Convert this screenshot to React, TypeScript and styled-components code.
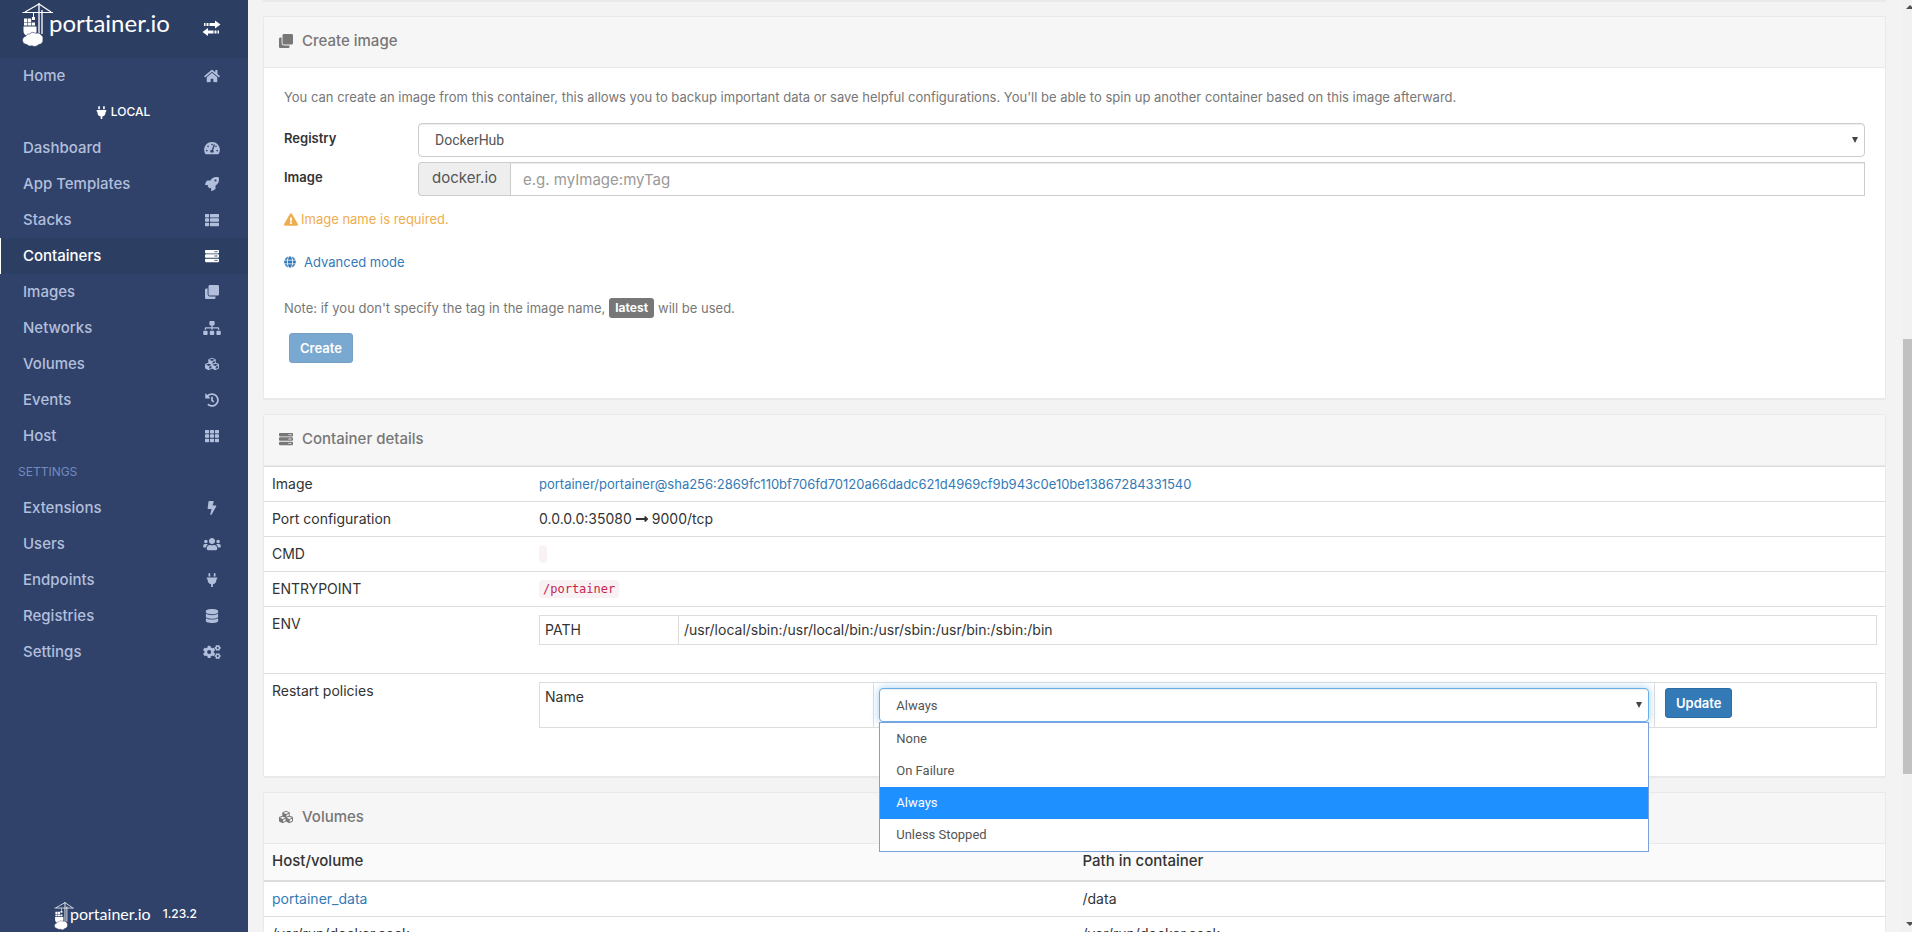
import React from "react";
import styled, { createGlobalStyle } from "styled-components";
import {
  FaBolt, FaClone, FaCogs, FaCubes, FaDatabase, FaExclamationTriangle, FaGlobe, FaHistory, FaHome,
  FaLongArrowAltRight, FaPlug, FaRocket, FaServer, FaSitemap, FaTachometerAlt, FaTh, FaThList, FaUsers,
} from "react-icons/fa";
import type { IconType } from "react-icons";

const GlobalStyle = createGlobalStyle`
  *, *::before, *::after { box-sizing: border-box; }
  body {
    margin: 0;
    background: #f3f3f3;
    color: #333;
    font: 400 13px/18px Inter, "Open Sans", sans-serif;
  }
  a { color: #337ab7; text-decoration: none; }
  button, input, select { font-family: inherit; margin: 0; }
`;

const Page = styled.div`
  display: flex;
  height: 100vh;
  overflow: hidden;
`;

/* ---------- Sidebar ---------- */

const Sidebar = styled.nav`
  flex: 0 0 248px;
  display: flex;
  flex-direction: column;
  background: #30426a;
`;

const SidebarHeader = styled.div`
  display: flex;
  align-items: flex-start;
  justify-content: space-between;
  height: 58px;
  padding: 3px 27px 0 22px;
  background: #2d3e63;
`;

const Brand = styled.div<{ $small?: boolean }>`
  display: flex;
  align-items: flex-start;
  color: #fff;
  font-family: Lato, sans-serif;
  font-size: ${(p) => (p.$small ? 16 : 24)}px;
  line-height: ${(p) => (p.$small ? 24 : 40)}px;
  svg {
    width: ${(p) => (p.$small ? 20 : 31)}px;
    height: ${(p) => (p.$small ? 28 : 44)}px;
    margin-right: -4px;
  }
`;

const ToggleButton = styled.button`
  display: flex;
  padding: 17px 0 0;
  border: 0;
  background: none;
  color: #fff;
`;

const Menu = styled.ul`
  flex: 1;
  margin: 0;
  padding: 0;
  list-style: none;
`;

const MenuLink = styled.a<{ $active?: boolean }>`
  display: flex;
  align-items: center;
  justify-content: space-between;
  height: 36px;
  padding: 0 27px 0 22px;
  border-left: 1px solid ${(p) => (p.$active ? "#fff" : "transparent")};
  background: ${(p) => (p.$active ? "#2d3e63" : "transparent")};
  color: ${(p) => (p.$active ? "#fff" : "#b2bfdc")};
  font-size: 15px;
  font-weight: 500;
  svg { width: 18px; height: 14px; }
`;

const MenuEndpoint = styled.li`
  display: flex;
  align-items: center;
  justify-content: center;
  gap: 3px;
  height: 36px;
  padding-right: 3px;
  color: #fff;
  font-size: 12px;
  font-weight: 500;
  svg { width: 13px; height: 13px; }
`;

const MenuTitle = styled.li`
  display: flex;
  align-items: center;
  height: 36px;
  padding-left: 18px;
  color: #738bc0;
  font-size: 12px;
`;

const SidebarFooter = styled.div`
  display: flex;
  align-items: flex-start;
  gap: 12px;
  height: 30px;
  padding-left: 54px;
`;

const Version = styled.span`
  color: #fff;
  font-size: 12px;
  font-weight: 500;
  line-height: 24px;
`;

/* ---------- Panels ---------- */

const Content = styled.main`
  flex: 1;
  min-width: 0;
  display: flex;
  flex-direction: column;
  gap: 14px;
  padding: 0 15px;
  overflow: hidden;
`;

const PanelEdge = styled.div`
  flex: 0 0 2px;
  background: #e9e9e9;
`;

const Panel = styled.section`
  flex: none;
  border: 1px solid #e9e9e9;
  border-bottom-width: 2px;
  border-radius: 2px;
  background: #fff;
`;

const PanelHeader = styled.h2`
  display: flex;
  align-items: center;
  gap: 9px;
  height: 51px;
  margin: 0;
  padding: 0 15px 2px;
  border-bottom: 1px solid #e9e9e9;
  background: #f6f6f6;
  color: #777;
  font-size: 15px;
  font-weight: 500;
  svg { flex: none; width: 14px; height: 14px; }
`;

/* ---------- Create image form ---------- */

const Form = styled.form`
  display: flex;
  flex-direction: column;
  padding: 20px 20px 35px;
  color: #777;
`;

const Fields = styled.div`
  display: grid;
  grid-template-columns: 134px 1fr;
  row-gap: 5px;
  margin: 17px 0 14px;
`;

const FieldLabel = styled.label`
  padding-top: 6px;
  color: #333;
  font-weight: 600;
`;

const SelectBox = styled.span`
  position: relative;
  display: block;
`;

const Select = styled.select<{ $open?: boolean }>`
  display: block;
  width: 100%;
  height: 34px;
  padding: 0 16px;
  appearance: none;
  outline: 0;
  border: 1px solid ${(p) => (p.$open ? "#66afe9" : "#ccc")};
  border-radius: 4px;
  background: #fff;
  box-shadow: inset 0 1px 1px rgba(0, 0, 0, 0.075)${(p) => (p.$open ? ", 0 0 8px rgba(102, 175, 233, 0.6)" : "")};
  color: #555;
  font-family: Roboto, sans-serif;
  font-size: ${(p) => (p.$open ? 13 : 14)}px;
`;

const SelectArrow = styled.span`
  position: absolute;
  top: 14px;
  right: 7px;
  border: 3px solid transparent;
  border-top: 6px solid #444;
  border-bottom: 0;
  pointer-events: none;
`;

const InputGroup = styled.div`
  display: flex;
  height: 34px;
`;

const Addon = styled.span`
  padding: 6px 13px 0;
  border: 1px solid #ccc;
  border-right: 0;
  border-radius: 4px 0 0 4px;
  background: #eee;
  color: #555;
  font-size: 15px;
`;

const TextInput = styled.input`
  flex: 1;
  min-width: 0;
  padding: 0 12px;
  border: 1px solid #ccc;
  box-shadow: inset 0 1px 1px rgba(0, 0, 0, 0.075);
  font-size: 15px;
  &::placeholder { color: #999; opacity: 1; }
`;

const Warning = styled.div`
  display: flex;
  align-items: center;
  gap: 3px;
  color: #f0ad4e;
  svg { width: 14px; height: 13px; }
`;

const ModeLink = styled.a`
  display: flex;
  align-items: center;
  align-self: flex-start;
  gap: 8px;
  margin: 25px 0 27px;
  svg { width: 12px; height: 12px; }
`;

const Note = styled.div`
  display: flex;
  align-items: center;
  gap: 4px;
  height: 20px;
`;

const Tag = styled.span`
  padding: 0 6px;
  border-radius: 3px;
  background: #777;
  color: #fff;
  font-size: 12px;
  font-weight: 700;
  line-height: 20px;
`;

const Button = styled.button`
  padding: 5px 10px;
  border: 1px solid #2e6da4;
  border-radius: 3px;
  background: #337ab7;
  color: #fff;
  font-size: 13px;
  font-weight: 600;
  line-height: 18px;
  &:disabled { opacity: 0.65; }
`;

const FormActions = styled.div`
  padding: 15px 5px 0;
`;

/* ---------- Tables ---------- */

const Table = styled.table`
  width: 100%;
  border-collapse: separate;
  border-spacing: 0;
  table-layout: fixed;
  font-size: 14px;
`;

const DetailsTable = styled(Table)`
  margin-bottom: 20px;
  & > tbody > tr > * {
    padding: 8px;
    border-top: 1px solid #ddd;
    font-weight: 400;
    text-align: left;
    vertical-align: top;
  }
`;

const LabelCol = styled.col`
  width: 267px;
`;

const Col = styled.col<{ $share?: number }>`
  width: ${(p) => (p.$share ? `${p.$share}%` : "auto")};
`;

const InnerTable = styled(Table)`
  margin-bottom: 20px;
  border-collapse: collapse;
  th, td {
    padding: 5px;
    border: 1px solid #ddd;
    font-weight: 400;
    text-align: left;
    vertical-align: top;
  }
  button { margin-left: 5px; }
`;

const DigestLink = styled.a`
  display: block;
  font-size: 13px;
`;

const Code = styled.code`
  display: inline-block;
  min-height: 18px;
  padding: 2px 4px;
  border-radius: 4px;
  background: #f9f2f4;
  color: #c7254e;
  font: 12px/14px "DejaVu Sans Mono", monospace;
  vertical-align: top;
`;

const Arrow = styled(FaLongArrowAltRight)`
  margin: 0 3px;
  vertical-align: -2px;
`;

const VolumesTable = styled(Table)`
  th, td {
    padding: 8px;
    border-bottom: 1px solid #ddd;
    text-align: left;
  }
  th {
    border-bottom-width: 2px;
    padding: 8px 8px 10px;
    background: #fafafa;
    font-size: 15px;
    font-weight: 500;
  }
`;

/* ---------- Open drop-down list ---------- */

const OptionList = styled.ul`
  position: absolute;
  z-index: 2;
  top: 34px;
  left: 0;
  right: 0;
  margin: 0;
  padding: 0;
  border: 1px solid #7d9fdb;
  background: #fff;
  list-style: none;
`;

const Option = styled.li<{ $selected?: boolean }>`
  padding: 0 16px;
  background: ${(p) => (p.$selected ? "#1e90ff" : "#fff")};
  color: ${(p) => (p.$selected ? "#fff" : "#555")};
  font-family: Roboto, sans-serif;
  font-size: 13px;
  line-height: 32px;
`;

/* ---------- Scroll bar ---------- */

const ScrollTrack = styled.div`
  flex: 0 0 11px;
  display: flex;
  flex-direction: column;
  align-items: flex-end;
  overflow: hidden;
  background: #f1f1f1;
  svg { flex: none; }
`;

const ScrollThumb = styled.div`
  flex: 435;
  width: 9px;
  background: #c1c1c1;
`;

const ScrollGap = styled.div<{ $share: number }>`
  flex: ${(p) => p.$share};
`;

const CraneLogo = () => (
  <svg viewBox="0 0 31 44" fill="none" stroke="#fff" aria-hidden="true">
    <path d="M0.500 9.500H31M17 1L3 9M17 1L29 9" strokeWidth="1.200" />
    <path d="M17 0V31M20 7V31" strokeWidth="1.300" />
    <path d="M11.500 10v4" strokeWidth="1" />
    <path d="M2 15.500h3.300v3.500H2zM5.900 15.500h3.300v3.500H5.900zM2 19.500h3.300v3H2zM5.900 19.500h3.300v3H5.900zM9.800 19.500h3.200v3H9.800zM10 14h3v3h-3z" fill="#fff" stroke="none" />
    <path d="M1.500 23.500h13v5c0 2.500-2 4-4.500 4H5.500c-2.500 0-4-2-4-4.500z" fill="#fff" stroke="none" />
    <path d="M5 41.500c-3 0-4.500-2-4.500-4.200 0-2 1.300-3.600 3.200-4 .8-1.700 2.300-2.600 4-2.300 1.200-1.800 4.200-2.200 6-.6 2-.8 4.500-.2 5.500 1.700 1.500.8 2.200 2.500 1.700 4.200.4 3-1.400 5.200-4.200 5.200-1.800 2.200-5 2.400-6.700 1.200-1.700.6-3.800.3-5-1.200z" fill="#fff" stroke="#2d3e63" strokeWidth=".6" />
  </svg>
);

const TransferIcon = () => (
  <svg width="19" height="17" viewBox="0 0 19 17" fill="currentColor" aria-hidden="true">
    <path d="M2 3h1.500v3H2zM4.500 3h2v3h-2zM7.500 3H13V0.500L18.500 4.500 13 8.500V6H7.500zM6 8L.5 12 6 16v-2.500h5.500v-3H6zM12.500 10.500h2v3h-2zM15.500 10.500H17v3h-1.500z" />
  </svg>
);

interface MenuEntry {
  label: string;
  icon: IconType;
}

const endpointEntries: MenuEntry[] = [
  { label: "Dashboard", icon: FaTachometerAlt },
  { label: "App Templates", icon: FaRocket },
  { label: "Stacks", icon: FaThList },
  { label: "Containers", icon: FaServer },
  { label: "Images", icon: FaClone },
  { label: "Networks", icon: FaSitemap },
  { label: "Volumes", icon: FaCubes },
  { label: "Events", icon: FaHistory },
  { label: "Host", icon: FaTh },
];

const settingsEntries: MenuEntry[] = [
  { label: "Extensions", icon: FaBolt },
  { label: "Users", icon: FaUsers },
  { label: "Endpoints", icon: FaPlug },
  { label: "Registries", icon: FaDatabase },
  { label: "Settings", icon: FaCogs },
];

const policies = ["None", "On Failure", "Always", "Unless Stopped"];

const MenuItem = ({ label, icon: Icon }: MenuEntry) => (
  <li>
    <MenuLink href="#" $active={label === "Containers"}>
      {label}
      <Icon />
    </MenuLink>
  </li>
);

export default function App() {
  return (
    <Page>
      <GlobalStyle />
      <Sidebar>
        <SidebarHeader>
          <Brand><CraneLogo />portainer.io</Brand>
          <ToggleButton type="button" aria-label="Toggle sidebar"><TransferIcon /></ToggleButton>
        </SidebarHeader>
        <Menu>
          <MenuItem label="Home" icon={FaHome} />
          <MenuEndpoint><FaPlug />LOCAL</MenuEndpoint>
          {endpointEntries.map((entry) => <MenuItem key={entry.label} {...entry} />)}
          <MenuTitle>SETTINGS</MenuTitle>
          {settingsEntries.map((entry) => <MenuItem key={entry.label} {...entry} />)}
        </Menu>
        <SidebarFooter>
          <Brand $small><CraneLogo />portainer.io</Brand>
          <Version>1.23.2</Version>
        </SidebarFooter>
      </Sidebar>

      <Content>
        <PanelEdge />
        <Panel>
          <PanelHeader><FaClone />Create image</PanelHeader>
          <Form>
            <div>
              You can create an image from this container, this allows you to backup important data or save helpful
              configurations. You'll be able to spin up another container based on this image afterward.
            </div>
            <Fields>
              <FieldLabel htmlFor="registry">Registry</FieldLabel>
              <SelectBox>
                <Select id="registry"><option>DockerHub</option></Select>
                <SelectArrow />
              </SelectBox>
              <FieldLabel htmlFor="image">Image</FieldLabel>
              <InputGroup>
                <Addon>docker.io</Addon>
                <TextInput id="image" type="text" placeholder="e.g. myImage:myTag" />
              </InputGroup>
            </Fields>
            <Warning><FaExclamationTriangle />Image name is required.</Warning>
            <ModeLink href="#"><FaGlobe />Advanced mode</ModeLink>
            <Note>
              Note: if you don't specify the tag in the image name, <Tag>latest</Tag> will be used.
            </Note>
            <FormActions><Button type="button" disabled>Create</Button></FormActions>
          </Form>
        </Panel>

        <Panel>
          <PanelHeader><FaServer />Container details</PanelHeader>
          <DetailsTable>
            <colgroup><LabelCol /><Col /></colgroup>
            <tbody>
              <tr>
                <th scope="row">Image</th>
                <td><DigestLink href="#">portainer/portainer@sha256:2869fc110bf706fd70120a66dadc621d4969cf9b943c0e10be13867284331540</DigestLink></td>
              </tr>
              <tr>
                <th scope="row">Port configuration</th>
                <td>0.0.0.0:35080<Arrow />9000/tcp</td>
              </tr>
              <tr>
                <th scope="row">CMD</th>
                <td><Code /></td>
              </tr>
              <tr>
                <th scope="row">ENTRYPOINT</th>
                <td><Code>/portainer</Code></td>
              </tr>
              <tr>
                <th scope="row">ENV</th>
                <td>
                  <InnerTable>
                    <colgroup><Col $share={10.4} /><Col /></colgroup>
                    <tbody>
                      <tr>
                        <th scope="row">PATH</th>
                        <td>/usr/local/sbin:/usr/local/bin:/usr/sbin:/usr/bin:/sbin:/bin</td>
                      </tr>
                    </tbody>
                  </InnerTable>
                </td>
              </tr>
              <tr>
                <th scope="row">Restart policies</th>
                <td>
                  <InnerTable>
                    <colgroup><Col $share={25} /><Col $share={58.4} /><Col /></colgroup>
                    <tbody>
                      <tr>
                        <th scope="row"><label htmlFor="policy">Name</label></th>
                        <td>
                          <SelectBox>
                            <Select id="policy" $open defaultValue="Always">
                              {policies.map((policy) => <option key={policy}>{policy}</option>)}
                            </Select>
                            <SelectArrow />
                            <OptionList role="listbox" aria-label="Restart policy">
                              {policies.map((policy) => (
                                <Option key={policy} role="option" aria-selected={policy === "Always"} $selected={policy === "Always"}>
                                  {policy}
                                </Option>
                              ))}
                            </OptionList>
                          </SelectBox>
                        </td>
                        <td><Button type="button">Update</Button></td>
                      </tr>
                    </tbody>
                  </InnerTable>
                </td>
              </tr>
            </tbody>
          </DetailsTable>
        </Panel>

        <Panel>
          <PanelHeader><FaCubes />Volumes</PanelHeader>
          <VolumesTable>
            <thead>
              <tr><th scope="col">Host/volume</th><th scope="col">Path in container</th></tr>
            </thead>
            <tbody>
              <tr><td><a href="#">portainer_data</a></td><td>/data</td></tr>
              <tr><td>/var/run/docker.sock</td><td>/var/run/docker.sock</td></tr>
            </tbody>
          </VolumesTable>
        </Panel>
      </Content>

      <ScrollTrack aria-hidden="true">
        <svg width="6" height="17" viewBox="0 0 6 17"><path d="M0 9L4 5l4 4z" fill="#505050" /></svg>
        <ScrollGap $share={322} />
        <ScrollThumb />
        <ScrollGap $share={141} />
        <svg width="6" height="17" viewBox="0 0 6 17"><path d="M0 7h8l-4 4z" fill="#505050" /></svg>
      </ScrollTrack>
    </Page>
  );
}
